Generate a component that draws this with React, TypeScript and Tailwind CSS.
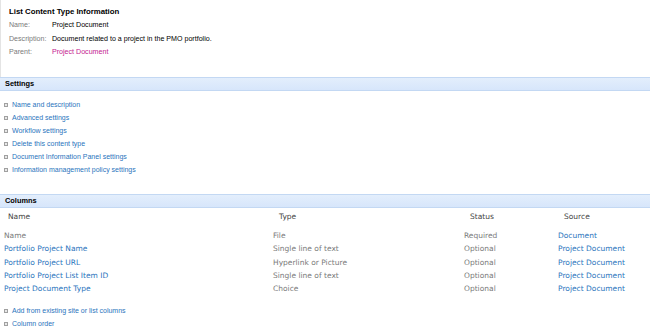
import React from 'react';

const verdana = { fontFamily: '"DejaVu Sans", Verdana, sans-serif' };
const tahoma = { fontFamily: '"Liberation Sans", Tahoma, Arial, sans-serif' };

const infoRows = [
  { label: 'Name:', value: 'Project Document', pink: false },
  { label: 'Description:', value: 'Document related to a project in the PMO portfolio.', pink: false },
  { label: 'Parent:', value: 'Project Document', pink: true },
];

const settingsLinks = [
  'Name and description',
  'Advanced settings',
  'Workflow settings',
  'Delete this content type',
  'Document Information Panel settings',
  'Information management policy settings',
];

const columns = [
  { name: 'Name', type: 'File', status: 'Required', source: 'Document', link: false },
  { name: 'Portfolio Project Name', type: 'Single line of text', status: 'Optional', source: 'Project Document', link: true },
  { name: 'Portfolio Project URL', type: 'Hyperlink or Picture', status: 'Optional', source: 'Project Document', link: true },
  { name: 'Portfolio Project List Item ID', type: 'Single line of text', status: 'Optional', source: 'Project Document', link: true },
  { name: 'Project Document Type', type: 'Choice', status: 'Optional', source: 'Project Document', link: true },
];

function Bullet() {
  return <span className="inline-block w-[4px] h-[4px] border border-[#a0a0a0] bg-[#e8e8e8] mr-[4px] shrink-0" />;
}

function SectionBar({ title }: { title: string }) {
  return (
    <div
      className="h-[14px] flex items-center pl-[5px] bg-gradient-to-b from-[#e3eefc] to-[#d7e6fb] border-t border-b border-[#c3d8f3] text-[7.4px] font-bold text-black"
      style={tahoma}
    >
      {title}
    </div>
  );
}

function LinkItem({ text }: { text: string }) {
  return (
    <div className="h-[13px] flex items-center pl-[4px] text-[7px] text-[#2a74bd]" style={tahoma}>
      <Bullet />
      {text}
    </div>
  );
}

export default function App() {
  return (
    <div className="w-[650px] h-[336px] bg-white overflow-hidden" style={verdana}>
      {/* Info block */}
      <div className="pt-[6px] pl-[8px] pb-[17px] border-l border-[#e4e4e4]" style={tahoma}>
        <div className="h-[12px] flex items-center text-[7.8px] font-bold text-black">List Content Type Information</div>
        <div className="mt-[1px]">
          {infoRows.map((r) => (
            <div key={r.label} className="h-[13.5px] flex items-center text-[7.1px]">
              <span className="w-[43px] text-[#7a7a7a]">{r.label}</span>
              <span className={r.pink ? 'text-[#c4218f]' : 'text-black'}>{r.value}</span>
            </div>
          ))}
        </div>
      </div>

      <SectionBar title="Settings" />
      <div className="pt-[8px] pb-[17px]">
        {settingsLinks.map((l) => (
          <LinkItem key={l} text={l} />
        ))}
      </div>

      <SectionBar title="Columns" />
      <div className="grid grid-cols-[269px_191px_94px_1fr] text-[7.5px]">
        <div className="h-[18px] flex items-center pl-[8px] text-[#444]">Name</div>
        <div className="h-[18px] flex items-center pl-[10px] text-[#444]">Type</div>
        <div className="h-[18px] flex items-center pl-[10px] text-[#444]">Status</div>
        <div className="h-[18px] flex items-center pl-[10px] text-[#444]">Source</div>
        <div className="col-span-4 h-[3.5px]" />
        {columns.map((c) => (
          <React.Fragment key={c.name}>
            <div className={`h-[13.25px] flex items-center pl-[4px] ${c.link ? 'text-[#2a74bd]' : 'text-[#7a7a7a]'}`}>{c.name}</div>
            <div className="h-[13.25px] flex items-center pl-[4px] text-[#7a7a7a]">{c.type}</div>
            <div className="h-[13.25px] flex items-center pl-[4px] text-[#7a7a7a]">{c.status}</div>
            <div className="h-[13.25px] flex items-center pl-[4px] text-[#2a74bd]">{c.source}</div>
          </React.Fragment>
        ))}
      </div>
      <div className="pt-[9px]">
        <LinkItem text="Add from existing site or list columns" />
        <LinkItem text="Column order" />
      </div>
    </div>
  );
}
